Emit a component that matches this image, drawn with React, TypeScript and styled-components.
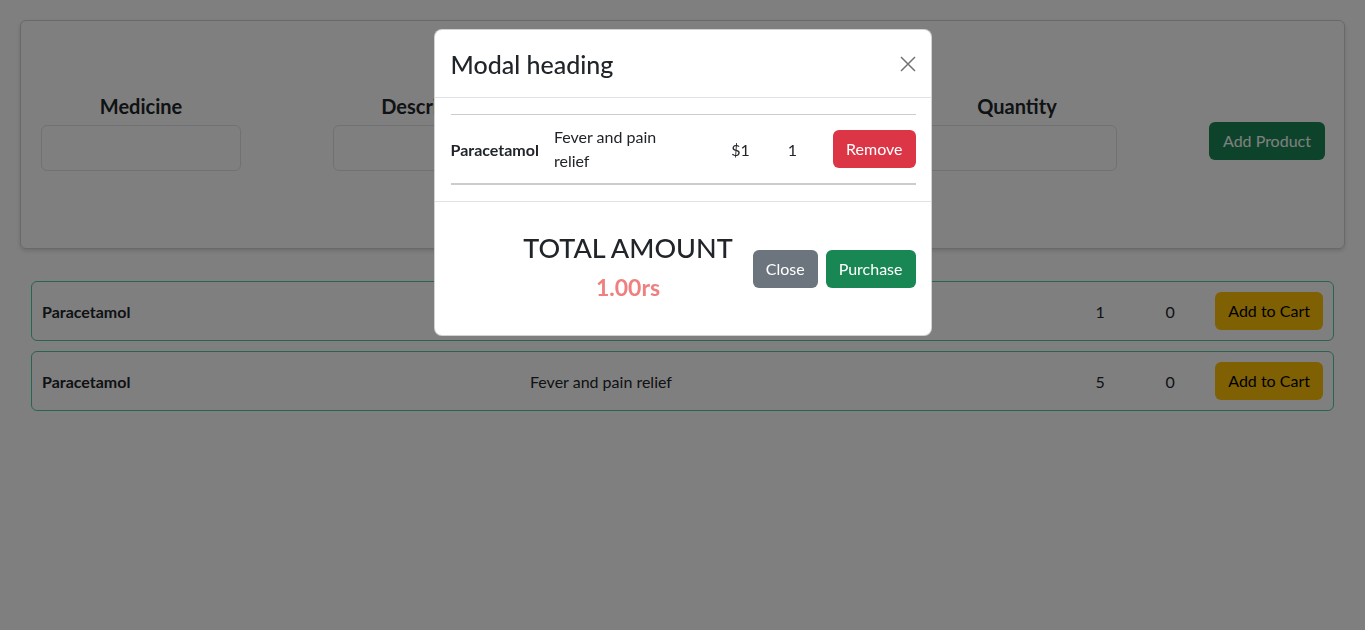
import React from 'react'
import styled, { createGlobalStyle } from 'styled-components'

const GlobalStyle = createGlobalStyle`
  body {
    margin: 0;
    background: #ffffff;
    font-family: Lato, 'Noto Sans', sans-serif;
    color: #212529;
    font-size: 16px;
  }
`

const Page = styled.div`
  padding: 20px 20px 0;
`

const FormCard = styled.div`
  border: 1px solid rgba(0, 0, 0, 0.175);
  border-radius: 6px;
  box-shadow: 0 2px 4px rgba(0, 0, 0, 0.15);
  padding: 72px 20px 77px;
  display: flex;
  align-items: flex-start;
  gap: 92px;
`

const Field = styled.div`
  width: 200px;
  display: flex;
  flex-direction: column;
  align-items: center;
`

const FieldLabel = styled.label`
  font-size: 20px;
  font-weight: 700;
  line-height: 27px;
  margin-bottom: 5px;
`

const Input = styled.input`
  box-sizing: border-box;
  width: 200px;
  height: 46px;
  border: 1px solid #dee2e6;
  border-radius: 6px;
  background: #fff;
`

const Button = styled.button<{ $bg: string; $fg?: string }>`
  font-family: inherit;
  font-size: 16px;
  line-height: 24px;
  padding: 7px 13px;
  border: none;
  border-radius: 6px;
  background: ${({ $bg }) => $bg};
  color: ${({ $fg }) => $fg || '#fff'};
  white-space: nowrap;
  cursor: pointer;
`

const AddProduct = styled(Button)`
  margin-top: 29px;
  padding: 7px 14px;
`

const List = styled.div`
  margin: 32px 11px 0;
  display: flex;
  flex-direction: column;
  gap: 10px;
`

const ItemRow = styled.div`
  height: 60px;
  box-sizing: border-box;
  border: 1px solid #52c99f;
  border-radius: 6px;
  padding: 0 10px;
  display: grid;
  grid-template-columns: 488px 1fr 70px 70px auto;
  align-items: center;
`

const Name = styled.span`
  font-weight: 700;
  font-size: 16px;
`

const Cell = styled.span<{ $center?: boolean }>`
  text-align: ${({ $center }) => ($center ? 'center' : 'left')};
`

const CartButton = styled(Button)`
  margin-left: 10px;
`

const Backdrop = styled.div`
  position: fixed;
  inset: 0;
  background: rgba(0, 0, 0, 0.5);
`

const Modal = styled.div`
  position: fixed;
  top: 29px;
  left: 50%;
  transform: translateX(-50%);
  width: 498px;
  box-sizing: border-box;
  background: #fff;
  border-radius: 8px;
  border: 1px solid rgba(0, 0, 0, 0.175);
`

const ModalHeader = styled.div`
  display: flex;
  align-items: center;
  justify-content: space-between;
  padding: 16px 15px 15px 16px;
  border-bottom: 1px solid #dee2e6;
`

const ModalTitle = styled.h4`
  margin: 0;
  font-size: 25px;
  font-weight: 500;
  line-height: 36px;
`

const CloseX = styled.button`
  border: none;
  background: none;
  padding: 0;
  display: flex;
  opacity: 0.55;
  cursor: pointer;
`

const ModalBody = styled.div`
  padding: 16px 15px 16px 16px;
`

const CartRow = styled.div`
  border-top: 1px solid #ccc;
  border-bottom: 2px solid #ccc;
  padding: 10px 0;
  display: flex;
  align-items: center;
`

const CartName = styled.span`
  font-weight: 700;
  font-size: 16px;
  margin-right: 15px;
`

const CartDesc = styled.span`
  width: 130px;
  font-size: 16px;
  line-height: 24px;
`

const Price = styled.span`
  margin-left: auto;
  font-size: 16px;
`

const Qty = styled.span`
  margin-left: 38px;
  font-size: 16px;
`

const RemoveButton = styled(Button)`
  margin-left: 36px;
`

const ModalFooter = styled.div`
  border-top: 1px solid #dee2e6;
  padding: 29px 15px 34px;
  display: flex;
  align-items: center;
  justify-content: flex-end;
  gap: 8px;
`

const FooterButton = styled(Button)`
  margin-top: 6px;
`

const Total = styled.div`
  display: flex;
  flex-direction: column;
  align-items: center;
  margin-right: 12px;
`

const TotalLabel = styled.h3`
  margin: 0;
  font-size: 27px;
  font-weight: 500;
  line-height: 34px;
`

const TotalValue = styled.h4`
  margin: 8px 0 0;
  font-size: 23px;
  font-weight: 700;
  line-height: 28px;
  color: lightcoral;
`

const items = [
  { name: 'Paracetamol', desc: 'Fever and pain relief', price: 1, qty: 0 },
  { name: 'Paracetamol', desc: 'Fever and pain relief', price: 5, qty: 0 },
]

const App = () => {
  return (
    <>
      <GlobalStyle />
      <Page>
        <FormCard>
          <Field>
            <FieldLabel>Medicine</FieldLabel>
            <Input />
          </Field>
          <Field>
            <FieldLabel>Description</FieldLabel>
            <Input />
          </Field>
          <Field>
            <FieldLabel>Price</FieldLabel>
            <Input />
          </Field>
          <Field>
            <FieldLabel>Quantity</FieldLabel>
            <Input />
          </Field>
          <AddProduct $bg="#198754">Add Product</AddProduct>
        </FormCard>
        <List>
          {items.map((item, i) => (
            <ItemRow key={i}>
              <Name>{item.name}</Name>
              <Cell>{item.desc}</Cell>
              <Cell $center>{item.price}</Cell>
              <Cell $center>{item.qty}</Cell>
              <CartButton $bg="#ffc107" $fg="#000">
                Add to Cart
              </CartButton>
            </ItemRow>
          ))}
        </List>
      </Page>
      <Backdrop />
      <Modal>
        <ModalHeader>
          <ModalTitle>Modal heading</ModalTitle>
          <CloseX aria-label="Close">
            <svg width="16" height="16" viewBox="0 0 16 16">
              <path d="M1 1 15 15M15 1 1 15" stroke="#000" strokeWidth="1.5" />
            </svg>
          </CloseX>
        </ModalHeader>
        <ModalBody>
          <CartRow>
            <CartName>Paracetamol</CartName>
            <CartDesc>Fever and pain relief</CartDesc>
            <Price>$1</Price>
            <Qty>1</Qty>
            <RemoveButton $bg="#dc3545">Remove</RemoveButton>
          </CartRow>
        </ModalBody>
        <ModalFooter>
          <Total>
            <TotalLabel>TOTAL AMOUNT</TotalLabel>
            <TotalValue>1.00rs</TotalValue>
          </Total>
          <FooterButton $bg="#6c757d">Close</FooterButton>
          <FooterButton $bg="#198754">Purchase</FooterButton>
        </ModalFooter>
      </Modal>
    </>
  )
}

export default App
